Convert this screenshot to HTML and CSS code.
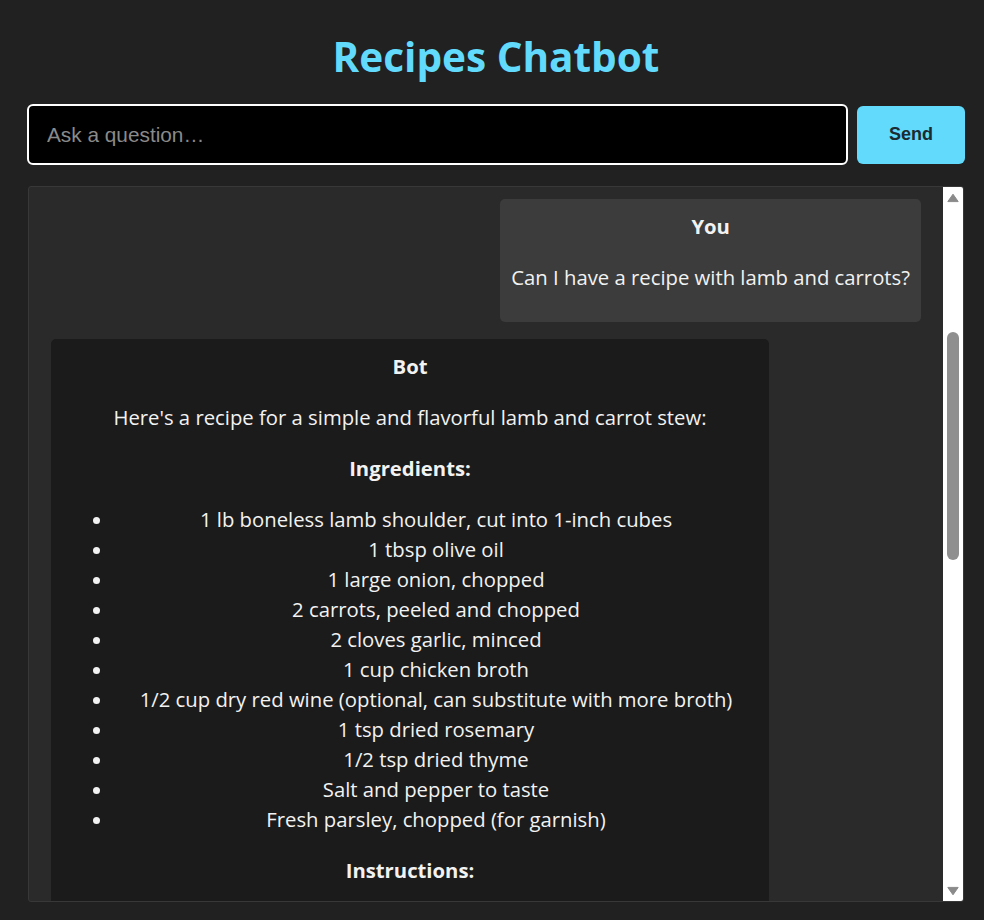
FILE: index.html
```html
<!DOCTYPE html>
<html lang="en">
<head>
<meta charset="utf-8">
<title>Recipes Chatbot</title>
<link rel="stylesheet" href="styles.css">
</head>
<body>
<div class="app">
  <h1 class="title">Recipes Chatbot</h1>
  <form class="ask-row" onsubmit="return false">
    <input class="ask-input" type="text" placeholder="Ask a question…" autofocus>
    <button class="send-btn" type="button">Send</button>
  </form>
  <div class="chat">
    <div class="chat-scroll">
      <div class="messages">
        <div class="msg user">
          <div class="sender">You</div>
          <p>Can I have a recipe with lamb and carrots?</p>
        </div>
        <div class="msg bot">
          <div class="sender">Bot</div>
          <p>Here's a recipe for a simple and flavorful lamb and carrot stew:</p>
          <p class="strong">Ingredients:</p>
          <ul class="list">
            <li>1 lb boneless lamb shoulder, cut into 1-inch cubes</li>
            <li>1 tbsp olive oil</li>
            <li>1 large onion, chopped</li>
            <li>2 carrots, peeled and chopped</li>
            <li>2 cloves garlic, minced</li>
            <li>1 cup chicken broth</li>
            <li>1/2 cup dry red wine (optional, can substitute with more broth)</li>
            <li>1 tsp dried rosemary</li>
            <li>1/2 tsp dried thyme</li>
            <li>Salt and pepper to taste</li>
            <li>Fresh parsley, chopped (for garnish)</li>
          </ul>
          <p class="strong">Instructions:</p>
        </div>
      </div>
    </div>
    <div class="scrollbar" aria-hidden="true">
      <svg class="sb-arrow up" width="12" height="10" viewBox="0 0 12 10"><path d="M6 1.2 L11.2 8.6 H0.8 Z" fill="#8a8a8a" stroke="#8a8a8a" stroke-width="1" stroke-linejoin="round"/></svg>
      <div class="sb-thumb"></div>
      <div class="sb-fill"></div>
      <svg class="sb-arrow down" width="12" height="10" viewBox="0 0 12 10"><path d="M6 8.8 L11.2 1.4 H0.8 Z" fill="#8a8a8a" stroke="#8a8a8a" stroke-width="1" stroke-linejoin="round"/></svg>
    </div>
  </div>
</div>
</body>
</html>
```

FILE: styles.css
```css
html, body {
  margin: 0;
  padding: 0;
  background: #212121;
}

body {
  font-family: "Open Sans", "Noto Sans", sans-serif;
  color: #f2f2f2;
}

.app {
  width: 938px;
  margin: 0 19px 0 27px;
  display: flex;
  flex-direction: column;
}

.title {
  margin: 0;
  padding-top: 33px;
  height: 48px;
  line-height: 48px;
  font-size: 40.5px;
  font-weight: 700;
  text-align: center;
  color: #61dafb;
}

.ask-row {
  margin: 23px 0 0;
  display: flex;
  align-items: center;
  gap: 9px;
}

.ask-input {
  flex: 1;
  box-sizing: border-box;
  height: 61px;
  padding: 0 18px;
  border: 2px solid #ffffff;
  border-radius: 6px;
  background: #000000;
  color: #ffffff;
  caret-color: #ffffff;
  font-family: "Liberation Sans", Arial, sans-serif;
  font-size: 20.8px;
  outline: none;
}

.ask-input::placeholder {
  color: #8a8a8a;
}

.send-btn {
  width: 108px;
  height: 58px;
  border: none;
  border-radius: 6px;
  background: #61dafb;
  color: #1c2a31;
  font-family: "Liberation Sans", Arial, sans-serif;
  font-size: 18px;
  font-weight: 700;
  cursor: pointer;
}

.chat {
  box-sizing: border-box;
  height: 716px;
  margin: 21px 1px 0 1px;
  border: 1px solid #383838;
  border-radius: 3px;
  background: #2a2a2a;
  display: flex;
  overflow: hidden;
}

.chat-scroll {
  flex: 1;
  min-width: 0;
  overflow: hidden;
}

.scrollbar {
  width: 20px;
  flex: none;
  background: #ffffff;
  display: flex;
  flex-direction: column;
  align-items: center;
}

.sb-arrow {
  display: block;
  flex: none;
}

.sb-arrow.up {
  margin-top: 6px;
}

.sb-arrow.down {
  margin-bottom: 5px;
}

.sb-thumb {
  flex: none;
  width: 12px;
  height: 228px;
  margin-top: 129px;
  border-radius: 6px;
  background: #8f8f8f;
}

.sb-fill {
  flex: 1;
}

.messages {
  padding: 12px 22px;
  display: flex;
  flex-direction: column;
  gap: 17px;
  font-size: 20.3px;
  line-height: 30px;
  text-align: center;
}

.msg {
  max-width: 80%;
  padding: 10px 11px;
  border-radius: 5px;
}

.msg.user {
  align-self: flex-end;
  background: #3c3c3c;
}

.msg.bot {
  align-self: flex-start;
  width: 80%;
  background: #1b1b1b;
}

.sender {
  margin-top: 2px;
  font-weight: 700;
}

.msg p {
  margin: 21px 0 0;
}

.msg p:last-child {
  margin-bottom: 20px;
}

.msg .strong {
  font-weight: 700;
}

.list {
  margin: 21px 0 0;
  padding-left: 52px;
}

.list li {
  margin: 0;
}
```
